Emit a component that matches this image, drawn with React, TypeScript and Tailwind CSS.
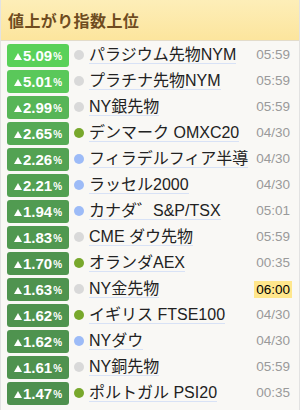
const rows = [
  { pct: "5.09", name: "パラジウム先物NYM", dot: "gray", time: "05:59", bg: "bg-[#59d159]" },
  { pct: "5.01", name: "プラチナ先物NYM", dot: "gray", time: "05:59", bg: "bg-[#5ac85a]" },
  { pct: "2.99", name: "NY銀先物", dot: "gray", time: "05:59", bg: "bg-[#57b557]" },
  { pct: "2.65", name: "デンマーク OMXC20", dot: "green", time: "04/30", bg: "bg-[#55aa55]" },
  { pct: "2.26", name: "フィラデルフィア半導", dot: "blue", time: "04/30", bg: "bg-[#53a253]" },
  { pct: "2.21", name: "ラッセル2000", dot: "blue", time: "04/30", bg: "bg-[#52a052]" },
  { pct: "1.94", name: "カナダ゛S&P/TSX", dot: "blue", time: "05:01", bg: "bg-[#519b51]" },
  { pct: "1.83", name: "CME ダウ先物", dot: "gray", time: "05:59", bg: "bg-[#509850]" },
  { pct: "1.70", name: "オランダAEX", dot: "green", time: "00:35", bg: "bg-[#4f944f]" },
  { pct: "1.63", name: "NY金先物", dot: "gray", time: "06:00", bg: "bg-[#4f934f]", hl: true },
  { pct: "1.62", name: "イギリス FTSE100", dot: "green", time: "04/30", bg: "bg-[#4f934f]" },
  { pct: "1.62", name: "NYダウ", dot: "blue", time: "04/30", bg: "bg-[#4f934f]" },
  { pct: "1.61", name: "NY銅先物", dot: "gray", time: "05:59", bg: "bg-[#4f924f]" },
  { pct: "1.47", name: "ポルトガル PSI20", dot: "green", time: "00:35", bg: "bg-[#4e904e]" },
];

const dotColor: Record<string, string> = {
  gray: "bg-[#d9d9d9]",
  green: "bg-[#78a82c]",
  blue: "bg-[#9dbbf7]",
};

export default function App() {
  return (
    <div className="w-[302px] h-[410px] overflow-hidden bg-white font-['Liberation_Sans','Noto_Sans_CJK_JP',sans-serif]">
      <div className="w-[300px] border-x border-[#e2e2e2] bg-[#f9f8f5]">
        {/* Header */}
        <div className="h-[41px] flex items-center px-[7px] bg-gradient-to-b from-[#fdeeb8] to-[#fce59d] border-b border-[#e3dccb]">
          <h2 className="text-[16px] font-bold text-[#6f4c1f] tracking-[0.4px] font-['Noto_Sans_CJK_JP',sans-serif]">
            値上がり指数上位
          </h2>
        </div>

        {/* Rows */}
        <div className="pt-[1px]">
          {rows.map((r, i) => (
            <div key={i} className="h-[26px] flex items-center pl-[6px] pr-[9px]">
              <div
                className={`w-[62px] h-[23px] rounded-[3px] ${r.bg} flex items-center justify-center text-white font-bold`}
              >
                <svg className="w-[8px] h-[7px] mr-[1px] mt-[2px]" viewBox="0 0 8 7" fill="currentColor">
                  <path d="M4 0L8 7H0z" />
                </svg>
                <span className="text-[15px] leading-none">{r.pct}</span>
                <span className="text-[10px] ml-[1px] mt-[3px]">%</span>
              </div>
              <span className={`w-[10px] h-[10px] rounded-full ${dotColor[r.dot]} ml-[5px]`} />
              <div className="flex-1 min-w-0 ml-[5px]">
                <span className="text-[16px] leading-[18px] text-[#222] border-b border-[#d8e2f6] whitespace-nowrap font-['Liberation_Sans','Noto_Sans_CJK_JP',sans-serif]">
                  {r.name}
                </span>
              </div>
              {r.hl ? (
                <span className="text-[13.5px] text-black bg-[#ffe78c] px-[2px] leading-[17px] -mr-[2px]">
                  {r.time}
                </span>
              ) : (
                <span className="text-[13.5px] text-[#9a9a9a]">{r.time}</span>
              )}
            </div>
          ))}
        </div>
        <div className="h-[4px]" />
        <div className="h-[4px] bg-[#fdeeb8] border-t border-[#f0e6c6]" />
      </div>
    </div>
  );
}
